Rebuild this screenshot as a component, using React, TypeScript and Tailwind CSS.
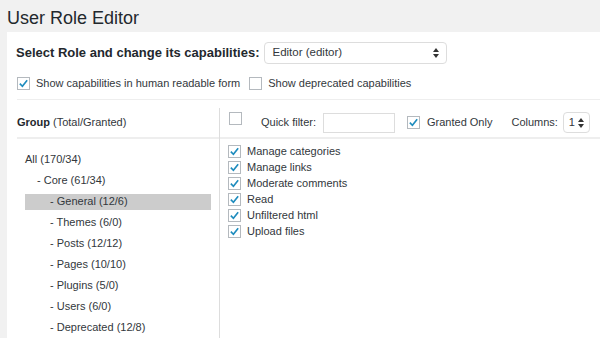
const groups = [
  { label: "All (170/34)", level: 0 },
  { label: "- Core (61/34)", level: 1 },
  { label: "- General (12/6)", level: 2, active: true },
  { label: "- Themes (6/0)", level: 2 },
  { label: "- Posts (12/12)", level: 2 },
  { label: "- Pages (10/10)", level: 2 },
  { label: "- Plugins (5/0)", level: 2 },
  { label: "- Users (6/0)", level: 2 },
  { label: "- Deprecated (12/8)", level: 2 },
];

const caps = [
  "Manage categories",
  "Manage links",
  "Moderate comments",
  "Read",
  "Unfiltered html",
  "Upload files",
];

function Box({ checked }: { checked?: boolean }) {
  return (
    <span className="w-[13px] h-[13px] shrink-0 border border-[#b4b9be] bg-white flex items-center justify-center">
      {checked && (
        <svg viewBox="0 0 12 12" className="w-[11px] h-[11px]">
          <path d="M2 6.2 L4.8 9 L10 2.5" fill="none" stroke="#1e8cbe" strokeWidth="1.8" />
        </svg>
      )}
    </span>
  );
}

function Arrows() {
  return (
    <svg viewBox="0 0 6 10" className="w-[6px] h-[10px]">
      <path d="M3 0 L6 4 L0 4 Z M3 10 L6 6 L0 6 Z" fill="#333" />
    </svg>
  );
}

export default function App() {
  return (
    <div
      className="w-[600px] h-[338px] overflow-hidden bg-[#f1f1f1] text-[#32373c] text-[11px] whitespace-nowrap"
      style={{ fontFamily: "'Liberation Sans', Arial, sans-serif" }}
    >
      <h1 className="pl-[7px] pt-[6px] h-[32px] text-[18px] leading-[24px] text-[#23282d]">User Role Editor</h1>

      <div className="ml-[7px] bg-white h-[306px] flex flex-col">
        <div className="pl-[9px] pt-[10px] flex items-center h-[32px]">
          <span className="text-[13px] font-bold text-[#23282d]">Select Role and change its capabilities:</span>
          <div className="ml-[5px] w-[183px] h-[22px] border border-[#ddd] rounded-[4px] flex items-center justify-between px-[7px] text-[11.5px]">
            <span>Editor (editor)</span>
            <Arrows />
          </div>
        </div>

        <div className="pl-[10px] mt-[12px] flex items-center h-[14px]">
          <Box checked />
          <span className="ml-[6px]">Show capabilities in human readable form</span>
          <span className="ml-[9px]"><Box /></span>
          <span className="ml-[6px]">Show deprecated capabilities</span>
        </div>

        <div className="ml-[10px] mt-[9px] h-[2px] bg-[#eee]" />

        <div className="ml-[10px] flex flex-1">
          <div className="w-[202px] flex flex-col">
            <div className="h-[39px] border-b-2 border-[#eee] flex items-center pt-[8px]">
              <span className="font-bold text-[#23282d]">Group</span>
              <span className="ml-[3px]">(Total/Granted)</span>
            </div>
            <div className="pt-[10px]">
              {groups.map((g) => (
                <div key={g.label} className="h-[21px] flex items-center mx-[8px]">
                  <div
                    className={
                      "flex-1 h-[16px] flex items-center " +
                      (g.level === 0 ? "pl-0" : g.level === 1 ? "pl-[12px]" : "pl-[25px]") +
                      (g.active ? " bg-[#ccc]" : "")
                    }
                  >
                    {g.label}
                  </div>
                </div>
              ))}
            </div>
          </div>

          <div className="flex-1 flex flex-col border-l border-[#ddd] mt-[8px]">
            <div className="h-[31px] border-b-2 border-[#eee] flex items-center pl-[9px]">
              <span className="-mt-[8px]"><Box /></span>
              <span className="ml-[19px]">Quick filter:</span>
              <span className="ml-[7px] w-[72px] h-[20px] border border-[#ddd]" />
              <span className="ml-[12px]"><Box checked /></span>
              <span className="ml-[7px]">Granted Only</span>
              <span className="ml-[19px]">Columns:</span>
              <span className="ml-[5px] w-[27px] h-[21px] border border-[#ddd] rounded-[4px] flex items-center justify-center gap-[3px]">
                1 <Arrows />
              </span>
            </div>
            <div className="pt-[4px] pl-[8px]">
              {caps.map((c) => (
                <div key={c} className="h-[16px] flex items-center">
                  <Box checked />
                  <span className="ml-[6px]">{c}</span>
                </div>
              ))}
            </div>
          </div>
        </div>
      </div>
    </div>
  );
}
